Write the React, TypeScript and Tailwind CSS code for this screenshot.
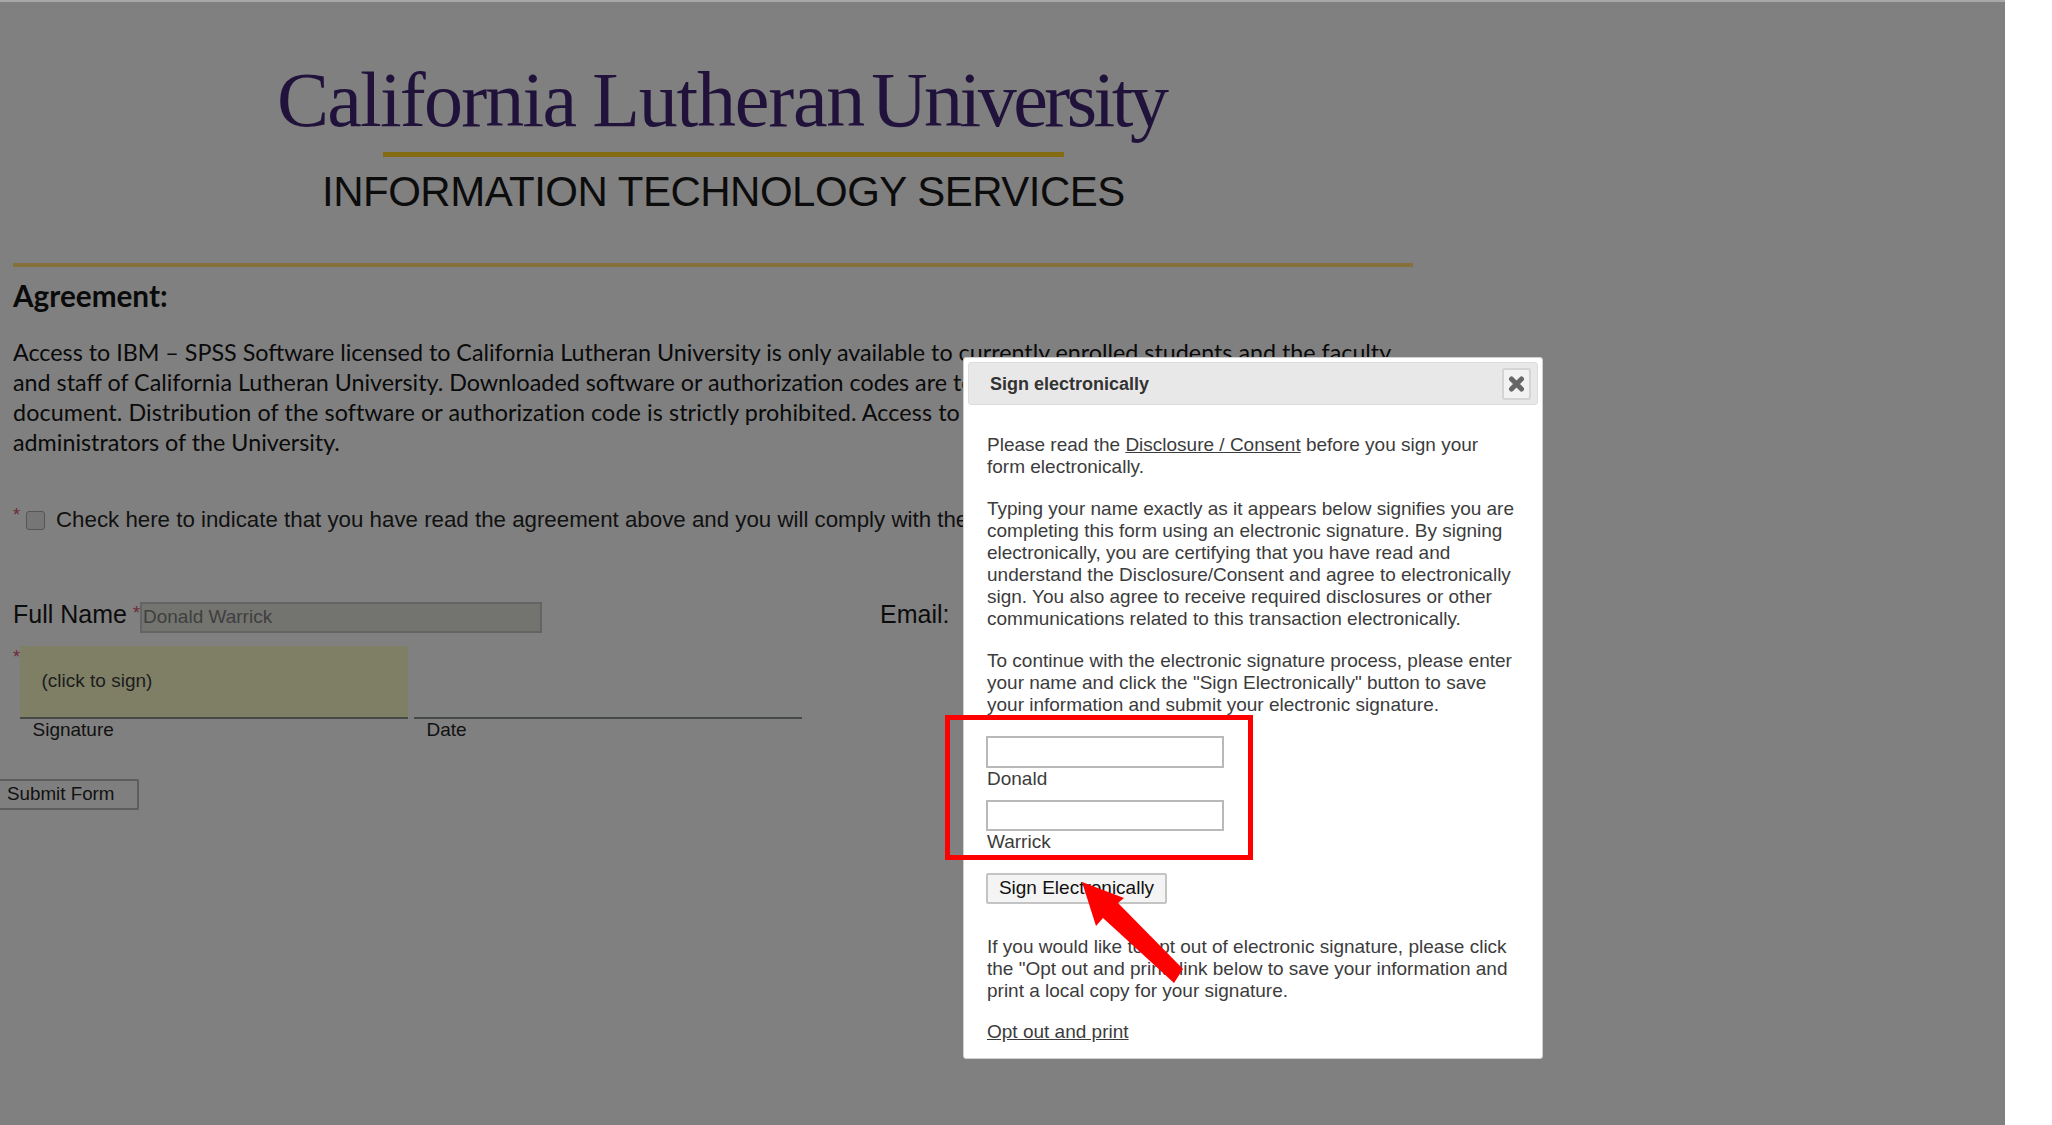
import React from 'react';

const arial = "font-['Liberation_Sans',Arial,sans-serif]";

const Agreement = () => {
  return (
    <div className="ml-[13px] w-[1400px] text-[#0a0a0a] font-['Lato',sans-serif]">
      <h2 className="mt-[14px] h-[30px] text-[29.7px] leading-[30px] font-bold">Agreement:</h2>
      <p className="mt-[26px] text-[23.3px] leading-[30px] whitespace-nowrap">
        Access to IBM – SPSS Software licensed to California Lutheran University is only available to currently enrolled students and the faculty
        <br />
        and staff of California Lutheran University. Downloaded software or authorization codes are to
        <br />
        <span className="tracking-[0.1px]">document. Distribution of the software or authorization code is strictly prohibited. Access to</span>
        <br />
        administrators of the University.
      </p>
    </div>
  );
};

const SignatureRow = () => {
  return (
    <div className={`mt-[13px] ml-[13px] flex items-start ${arial}`}>
      <span className="w-[6.5px] text-[18px] leading-[22px] text-[#6e2a36]">*</span>
      <div className="w-[388px]">
        <div className="flex h-[71px] items-center bg-[#7f7f66] pl-[22px] text-[19px] text-[#1c1c1c]">(click to sign)</div>
        <div className="h-[2px] bg-[#454a48]" />
        <div className="pl-[13px] text-[19px] leading-[22px] text-[#111]">Signature</div>
      </div>
      <div className="ml-[6px] w-[388px]">
        <div className="h-[71px]" />
        <div className="h-[2px] bg-[#454a48]" />
        <div className="pl-[13px] text-[19px] leading-[22px] text-[#111]">Date</div>
      </div>
    </div>
  );
};

const SignModal = () => {
  return (
    <div className={`absolute left-[963px] top-[357px] h-[702px] w-[580px] rounded-[3px] border border-[#d0d0d0] bg-white p-[4px] text-[19px] leading-[22px] text-[#3c3c3c] ${arial}`}>
      <div className="flex h-[43px] items-center justify-between rounded-[3px] border border-[#dcdcdc] bg-[#e8e8e8] pl-[21px] pr-[6px]">
        <span className="text-[18px] font-bold text-[#333]">Sign electronically</span>
        <button className="flex h-[32px] w-[29px] items-center justify-center rounded-[3px] border-2 border-[#d4d4d4] bg-[#f2f2f2]">
          <svg width="17" height="16" viewBox="0 0 17 16">
            <path d="M3.5 3 L13.5 13 M13.5 3 L3.5 13" stroke="#666" strokeWidth="5" strokeLinecap="round" fill="none" />
          </svg>
        </button>
      </div>
      <div className="pl-[19px] pt-[29px]">
        <p>
          Please read the <span className="underline">Disclosure / Consent</span> before you sign your
          <br />
          form electronically.
        </p>
        <p className="mt-[20px]">
          Typing your name exactly as it appears below signifies you are
          <br />
          completing this form using an electronic signature. By signing
          <br />
          electronically, you are certifying that you have read and
          <br />
          understand the Disclosure/Consent and agree to electronically
          <br />
          sign. You also agree to receive required disclosures or other
          <br />
          communications related to this transaction electronically.
        </p>
        <p className="mt-[20px]">
          To continue with the electronic signature process, please enter
          <br />
          your name and click the "Sign Electronically" button to save
          <br />
          your information and submit your electronic signature.
        </p>
        <div className="mt-[20px] -ml-px h-[32px] w-[238px] border-2 border-[#b9b9b9] bg-white" />
        <div className="h-[32px]">Donald</div>
        <div className="-ml-px h-[31px] w-[238px] border-2 border-[#b9b9b9] bg-white" />
        <div className="h-[42px]">Warrick</div>
        <button className="-ml-px flex h-[31px] w-[181px] items-center justify-center rounded-[2px] border-2 border-[#c4c4c4] bg-[#f4f4f4] pb-[2px] text-[#111]">
          Sign Electronically
        </button>
        <p className="mt-[32px]">
          If you would like to opt out of electronic signature, please click
          <br />
          the "Opt out and print" link below to save your information and
          <br />
          print a local copy for your signature.
        </p>
        <p className="mt-[19px] underline">Opt out and print</p>
      </div>
    </div>
  );
};

const App: React.FC = () => {
  return (
    <div className="flex h-[1125px] w-[2052px] overflow-hidden bg-white">
      <div className="relative h-full w-[2005px] bg-[#808080]">
        <div className="h-[2px] bg-[#a8a8a8]" />

        <div className="ml-[277px] mt-[58px] flex h-[80px] whitespace-nowrap font-['Liberation_Serif',serif] text-[78px] leading-[80px] text-[#20123a]">
          <span className="tracking-[-1.8px]">California</span>
          <span className="ml-[17px] tracking-[-1.2px]">Lutheran</span>
          <span className="ml-[7px] tracking-[-3.5px]">University</span>
        </div>
        <div className="ml-[383px] mt-[12px] h-[5px] w-[681px] bg-[#846a10]" />
        <div className={`ml-[322px] mt-[11px] h-[48px] whitespace-nowrap text-[42px] leading-[48px] tracking-[-0.5px] text-[#0c0c0c] ${arial}`}>
          INFORMATION TECHNOLOGY SERVICES
        </div>
        <div className="ml-[13px] mt-[47px] h-[4px] w-[1400px] bg-[#86703a]" />

        <Agreement />

        <div className={`mt-[48px] ml-[13px] flex h-[30px] items-center whitespace-nowrap text-[22.3px] text-[#111] ${arial}`}>
          <span className="-mt-[10px] w-[13px] text-[18px] text-[#6e2a36]">*</span>
          <span className="h-[19px] w-[19px] rounded-[3px] border border-[#555] bg-[#767676]" />
          <span className="ml-[11px]">Check here to indicate that you have read the agreement above and you will comply with the</span>
        </div>

        <div className={`mt-[66px] ml-[13px] flex h-[32px] items-center whitespace-nowrap text-[25px] text-[#0c0c0c] ${arial}`}>
          <span className="-mt-[4px] w-[120px]">Full Name</span>
          <span className="-mt-[8px] w-[7px] text-[18px] text-[#6e2a36]">*</span>
          <div className="flex h-[31px] w-[402px] items-center border-2 border-[#646464] bg-[#73736f] pl-[1px] text-[19px] text-[#3f3f3f]">
            Donald Warrick
          </div>
          <span className="-mt-[4px] ml-[338px]">Email:</span>
        </div>

        <SignatureRow />

        <button className={`mt-[38px] flex h-[31px] w-[139px] items-center rounded-r-[2px] border-2 border-l-0 border-[#5c5c5c] bg-[#7f7f7f] pl-[7px] text-[18.8px] text-[#111] ${arial}`}>
          Submit Form
        </button>

        <SignModal />

        {/* annotation drawn over the modal */}
        <div className="absolute left-[945px] top-[715px] h-[145px] w-[308px] border-[5px] border-[#ff0000]" />
        <svg className="absolute left-[1070px] top-[875px]" width="125" height="120" viewBox="1070 875 125 120">
          <polygon points="1082,882 1124,898 1118,903 1183,969 1174,983 1103,918 1096,926" fill="#ff0000" />
        </svg>
      </div>
    </div>
  );
};

export default App;
